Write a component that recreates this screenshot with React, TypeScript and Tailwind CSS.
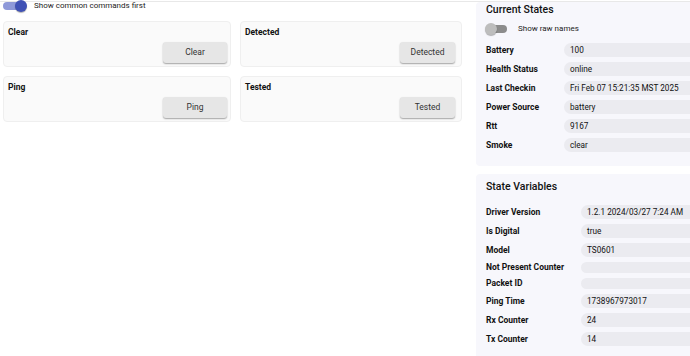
import React from "react";

const font = { fontFamily: "Roboto, 'Noto Sans', sans-serif" };

function CmdCard({ title, w, mr }: { title: string; w: string; mr: string }) {
  return (
    <div className="rounded-[4px] border border-[#efefef] bg-[#fafafa] pt-[4px] pb-[3px] pl-[4px] flex flex-col">
      <div className="text-[8.5px] leading-[12px] font-bold text-[#111]">{title}</div>
      <div className="flex justify-end mt-[4px]">
        <button
          className={`${w} ${mr} h-[21px] rounded-[3px] bg-[#e6e6e6] text-[8.5px] text-[#333] shadow-[0_1px_1.5px_rgba(0,0,0,0.35)]`}
        >
          {title}
        </button>
      </div>
    </div>
  );
}

function Row({ label, value, labelW }: { label: string; value: string; labelW: string }) {
  return (
    <div className="flex items-center">
      <div className={`${labelW} shrink-0 text-[8.5px] leading-[11px] font-bold text-[#111]`}>{label}</div>
      <div
        className={`flex-1 rounded-l-[7px] bg-[#ebebf0] pl-[6px] text-[8.2px] text-[#111] whitespace-nowrap overflow-hidden ${
          value ? "h-[14px] leading-[14px]" : "h-[11px]"
        }`}
      >
        {value}
      </div>
    </div>
  );
}

export default function App() {
  const current: [string, string][] = [
    ["Battery", "100"],
    ["Health Status", "online"],
    ["Last Checkin", "Fri Feb 07 15:21:35 MST 2025"],
    ["Power Source", "battery"],
    ["Rtt", "9167"],
    ["Smoke", "clear"],
  ];
  const vars: [string, string][] = [
    ["Driver Version", "1.2.1 2024/03/27 7:24 AM"],
    ["Is Digital", "true"],
    ["Model", "TS0601"],
    ["Not Present Counter", ""],
    ["Packet ID", ""],
    ["Ping Time", "1738967973017"],
    ["Rx Counter", "24"],
    ["Tx Counter", "14"],
  ];
  return (
    <div className="w-[690px] h-[356px] overflow-hidden bg-white relative" style={font}>
      <div className="h-[1px]" />
      <div className="h-[1px] bg-[#e8e8e8]" />
      <div className="flex">
        {/* left */}
        <div className="w-[476px] shrink-0 pl-[3px]">
          <div className="flex items-center h-[12px] -mt-[2px]">
            <div className="relative w-[24px] h-[12px]">
              <div className="absolute left-[0px] top-[2px] w-[22px] h-[8px] rounded-full bg-[#8e99d9]" />
              <div className="absolute left-[12px] top-[0px] w-[12px] h-[12px] rounded-full bg-[#3f51b5] shadow-[0_1px_1px_rgba(0,0,0,0.3)]" />
            </div>
            <span className="ml-[7px] text-[8px] text-[#222]">Show common commands first</span>
          </div>
          <div className="grid grid-cols-[228px_222px] gap-x-[9px] gap-y-[9px] mt-[9px]">
            <CmdCard title="Clear" w="w-[64px]" mr="mr-[3px]" />
            <CmdCard title="Detected" w="w-[55px]" mr="mr-[6px]" />
            <CmdCard title="Ping" w="w-[64px]" mr="mr-[3px]" />
            <CmdCard title="Tested" w="w-[55px]" mr="mr-[6px]" />
          </div>
        </div>
        {/* right */}
        <div className="w-[240px] shrink-0 flex flex-col gap-[8px]">
          <div className="bg-[#f7f7fc] rounded-l-[4px] pl-[10px] pt-[1px] pb-[14px]">
            <div className="text-[10.5px] leading-[14px] font-medium text-[#111]">Current States</div>
            <div className="flex items-center h-[12px] mt-[6px]">
              <div className="relative w-[22px] h-[12px]">
                <div className="absolute left-[0px] top-[2px] w-[21px] h-[8px] rounded-full bg-[#8c8c8c]" />
                <div className="absolute left-[-1px] top-[0px] w-[12px] h-[12px] rounded-full bg-[#bdbdbd] shadow-[0_1px_1px_rgba(0,0,0,0.3)]" />
              </div>
              <span className="ml-[10px] text-[8px] text-[#222]">Show raw names</span>
            </div>
            <div className="flex flex-col gap-[5px] mt-[8px]">
              {current.map(([l, v]) => (
                <Row key={l} label={l} value={v} labelW="w-[78px]" />
              ))}
            </div>
          </div>
          <div className="bg-[#f7f7fc] rounded-l-[4px] pl-[10px] pt-[6px] pb-[14px]">
            <div className="text-[10.5px] leading-[14px] font-medium text-[#111]">State Variables</div>
            <div className="flex flex-col gap-[5px] mt-[11px]">
              {vars.map(([l, v]) => (
                <Row key={l} label={l} value={v} labelW="w-[95px]" />
              ))}
            </div>
          </div>
        </div>
      </div>
    </div>
  );
}
